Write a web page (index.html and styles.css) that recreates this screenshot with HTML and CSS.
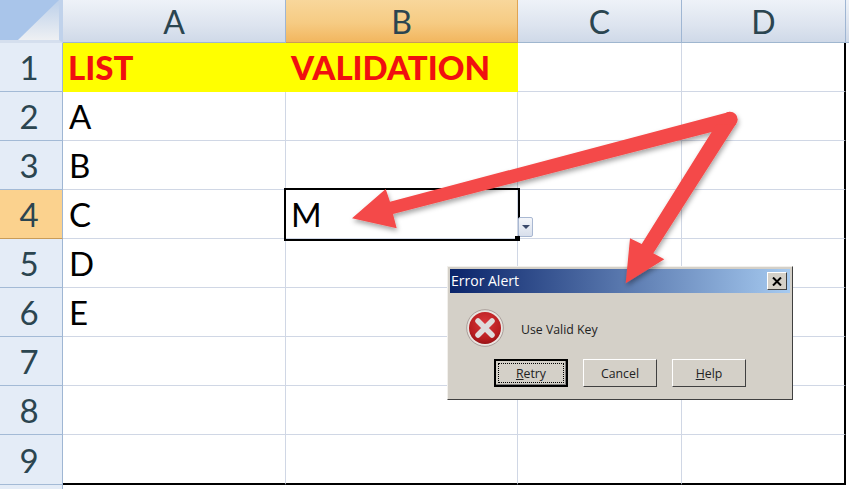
FILE: index.html
```html
<!DOCTYPE html>
<html lang="en">
<head>
    <meta charset="UTF-8">
    <title>List Validation</title>
    <link rel="stylesheet" href="styles.css">
</head>
<body>
    <div class="page">
        <div class="sheet">
            <div class="corner"><div class="corner-mark"></div></div>
            <div class="col-head">A</div>
            <div class="col-head selected">B</div>
            <div class="col-head">C</div>
            <div class="col-head">D</div>
            <div class="col-head filler"></div>

            <div class="row-head">1</div>
            <div class="cell title">LIST</div>
            <div class="cell title">VALIDATION</div>
            <div class="cell"></div>
            <div class="cell last-col"></div>

            <div class="row-head">2</div>
            <div class="cell">A</div>
            <div class="cell"></div>
            <div class="cell"></div>
            <div class="cell last-col"></div>

            <div class="row-head">3</div>
            <div class="cell">B</div>
            <div class="cell"></div>
            <div class="cell"></div>
            <div class="cell last-col"></div>

            <div class="row-head selected">4</div>
            <div class="cell">C</div>
            <div class="cell active">M
                <div class="dropdown-btn"><span class="dropdown-arrow"></span></div>
                <div class="fill-handle"></div>
            </div>
            <div class="cell"></div>
            <div class="cell last-col"></div>

            <div class="row-head">5</div>
            <div class="cell">D</div>
            <div class="cell"></div>
            <div class="cell"></div>
            <div class="cell last-col"></div>

            <div class="row-head">6</div>
            <div class="cell">E</div>
            <div class="cell"></div>
            <div class="cell"></div>
            <div class="cell last-col"></div>

            <div class="row-head">7</div>
            <div class="cell"></div>
            <div class="cell"></div>
            <div class="cell"></div>
            <div class="cell last-col"></div>

            <div class="row-head">8</div>
            <div class="cell"></div>
            <div class="cell"></div>
            <div class="cell"></div>
            <div class="cell last-col"></div>

            <div class="row-head">9</div>
            <div class="cell last-row"></div>
            <div class="cell last-row"></div>
            <div class="cell last-row"></div>
            <div class="cell last-row last-col"></div>

            <div class="row-head stub"></div>
        </div>

        <div class="dialog">
            <div class="dialog-title">
                <span class="dialog-caption">Error Alert</span>
                <div class="close-btn">
                    <svg width="10" height="9" viewBox="0 0 10 9"><path d="M1 0.5 L9 8.5 M9 0.5 L1 8.5" stroke="#000" stroke-width="2" fill="none"/></svg>
                </div>
            </div>
            <div class="dialog-body">
                <svg class="error-icon" width="38" height="38" viewBox="0 0 38 38">
                    <defs>
                        <radialGradient id="redGrad" cx="50%" cy="35%" r="70%">
                            <stop offset="0" stop-color="#d9383c"/>
                            <stop offset="0.7" stop-color="#b81d20"/>
                            <stop offset="1" stop-color="#8e0f12"/>
                        </radialGradient>
                    </defs>
                    <circle cx="19" cy="19" r="18.3" fill="#e9e4e0" stroke="#9c8f8c" stroke-width="0.8"/>
                    <circle cx="19" cy="19" r="16" fill="url(#redGrad)"/>
                    <path d="M12 12 L26 26 M26 12 L12 26" stroke="#dedcdc" stroke-width="5.5" stroke-linecap="round"/>
                </svg>
                <span class="dialog-msg">Use Valid Key</span>
            </div>
            <div class="dialog-buttons">
                <div class="btn default"><span class="btn-focus"><u>R</u>etry</span></div>
                <div class="btn">Cancel</div>
                <div class="btn"><span><u>H</u>elp</span></div>
            </div>
        </div>

        <!-- red arrows over the sheet and the dialog -->
        <svg class="arrows" width="849" height="489" viewBox="0 0 849 489">
            <defs>
                <filter id="arrowShadow" x="-10%" y="-10%" width="120%" height="130%">
                    <feDropShadow dx="1" dy="3" stdDeviation="2.5" flood-color="#000" flood-opacity="0.35"/>
                </filter>
            </defs>
            <g fill="#f44a48" filter="url(#arrowShadow)">
                <circle cx="730" cy="119.5" r="7.7"/>
                <polygon points="730,111.8 390,201.7 385.7,189 352,218.3 396.7,228.3 393,214 731,127"/>
                <polygon points="716,125 641.7,244 630,238.3 625.7,283.3 664.3,259.3 653.3,253.3 736,124"/>
            </g>
        </svg>
    </div>
</body>
</html>
```

FILE: styles.css
```css
html, body {
    margin: 0;
    padding: 0;
    background-color: #fff;
}
.page {
    position: relative;
    width: 849px;
    height: 489px;
    overflow: hidden;
    background-color: #fff;
}
.sheet {
    display: grid;
    grid-template-columns: 63px 223px 232px 164px 164px 3px;
    grid-template-rows: 43px repeat(8, 49px) 50px 4px;
    font-family: "Lato", "Open Sans", sans-serif;
}
.corner {
    background-color: #a9c5ea;
    border-right: 4px solid #c0d2eb;
    border-bottom: 3px solid #d5dfee;
    box-sizing: border-box;
    padding-left: 18px;
}
.corner-mark {
    width: 100%;
    height: 100%;
    background: linear-gradient(#bcd0ea, #eef0f3);
    clip-path: polygon(100% 0, 100% 100%, 0 100%);
}
.col-head {
    display: flex;
    align-items: center;
    justify-content: center;
    background: linear-gradient(#eef2f8, #dde4ef 60%, #cfd9e8);
    border-right: 1px solid #9fb6d3;
    border-bottom: 1px solid #9fb6cf;
    color: #2b4550;
    font-size: 32px;
    box-sizing: border-box;
}
.col-head.selected {
    background: linear-gradient(#f8d79b, #f6cb83 55%, #f2b65e);
    border-right-color: #e0a452;
    border-bottom-color: #c99c58;
}
.col-head.filler {
    border-right: none;
}
.row-head {
    grid-column: 1;
    display: flex;
    align-items: center;
    justify-content: center;
    padding-right: 4px;
    background-color: #e4ecf7;
    border-right: 1px solid #9fb6d3;
    border-bottom: 1px solid #a3bad6;
    color: #2b4550;
    font-size: 33px;
    box-sizing: border-box;
}
.row-head.selected {
    background: #fbd28e;
    border-bottom-color: #c99c58;
}
.row-head.stub {
    border-bottom: none;
}
.cell {
    position: relative;
    display: flex;
    align-items: center;
    padding-left: 6px;
    border-right: 1px solid #d0d7e5;
    border-bottom: 1px solid #d0d7e5;
    color: #000;
    font-size: 33px;
    box-sizing: border-box;
}
.cell.last-col {
    border-right: 2px solid #000;
}
.cell.last-row {
    border-bottom: 2px solid #000;
}
.cell.title {
    background-color: #ffff00;
    color: #f01010;
    font-weight: 900;
    font-size: 33px;
    padding-left: 5px;
    border-right-color: #ffff00;
    border-bottom-color: #ffff00;
}
.cell.active {
    padding-left: 5px;
    outline: 2px solid #000;
    z-index: 2;
}
.dropdown-btn {
    position: absolute;
    left: 232px;
    top: 27px;
    width: 15px;
    height: 20px;
    box-sizing: border-box;
    border: 1px solid #a9b8d2;
    border-radius: 2px;
    background: linear-gradient(#f4f6fa, #d8dfec);
    display: flex;
    align-items: center;
    justify-content: center;
}
.dropdown-arrow {
    width: 0;
    height: 0;
    border-left: 4px solid transparent;
    border-right: 4px solid transparent;
    border-top: 4px solid #3a4a6b;
}
.fill-handle {
    position: absolute;
    left: 229px;
    top: 46px;
    width: 5px;
    height: 5px;
    background-color: #000;
}
.dialog {
    position: absolute;
    left: 447px;
    top: 266px;
    width: 346px;
    height: 134px;
    box-sizing: border-box;
    padding: 2px;
    background-color: #d4d0c8;
    border: 1px solid #f2f0ec;
    border-right-color: #404040;
    border-bottom-color: #404040;
    font-family: "Open Sans", "Liberation Sans", sans-serif;
    z-index: 3;
}
.dialog-title {
    display: flex;
    align-items: center;
    justify-content: space-between;
    height: 24px;
    padding: 0 3px 0 1px;
    background: linear-gradient(90deg, #0a246a, #a6caf0);
    color: #fff;
    font-size: 14px;
    font-weight: 500;
}
.dialog-caption {
    margin-top: -2px;
}
.close-btn {
    width: 20px;
    height: 18px;
    box-sizing: border-box;
    display: flex;
    align-items: center;
    justify-content: center;
    background-color: #d4d0c8;
    border: 1px solid #fff;
    border-right-color: #404040;
    border-bottom-color: #404040;
}
.dialog-body {
    display: flex;
    align-items: center;
    height: 66px;
    box-sizing: border-box;
    padding: 3px 0 0 16px;
}
.error-icon {
    margin-right: 17px;
}
.dialog-msg {
    margin-top: 3px;
    font-size: 12.3px;
    color: #222;
}
.dialog-buttons {
    display: flex;
    gap: 15px;
    padding-left: 44px;
}
.btn {
    width: 74px;
    height: 28px;
    box-sizing: border-box;
    display: flex;
    align-items: center;
    justify-content: center;
    background-color: #d4d0c8;
    border: 1px solid #fff;
    border-right-color: #404040;
    border-bottom-color: #404040;
    font-size: 12.3px;
    color: #222;
}
.btn.default {
    padding: 2px;
    border: 2px solid #000;
    box-shadow: inset -1px -1px 0 #808080;
}
.btn-focus {
    flex: 1;
    align-self: stretch;
    display: flex;
    align-items: center;
    justify-content: center;
    border: 1px dotted #000;
}
.arrows {
    position: absolute;
    left: 0;
    top: 0;
    z-index: 4;
}
```
